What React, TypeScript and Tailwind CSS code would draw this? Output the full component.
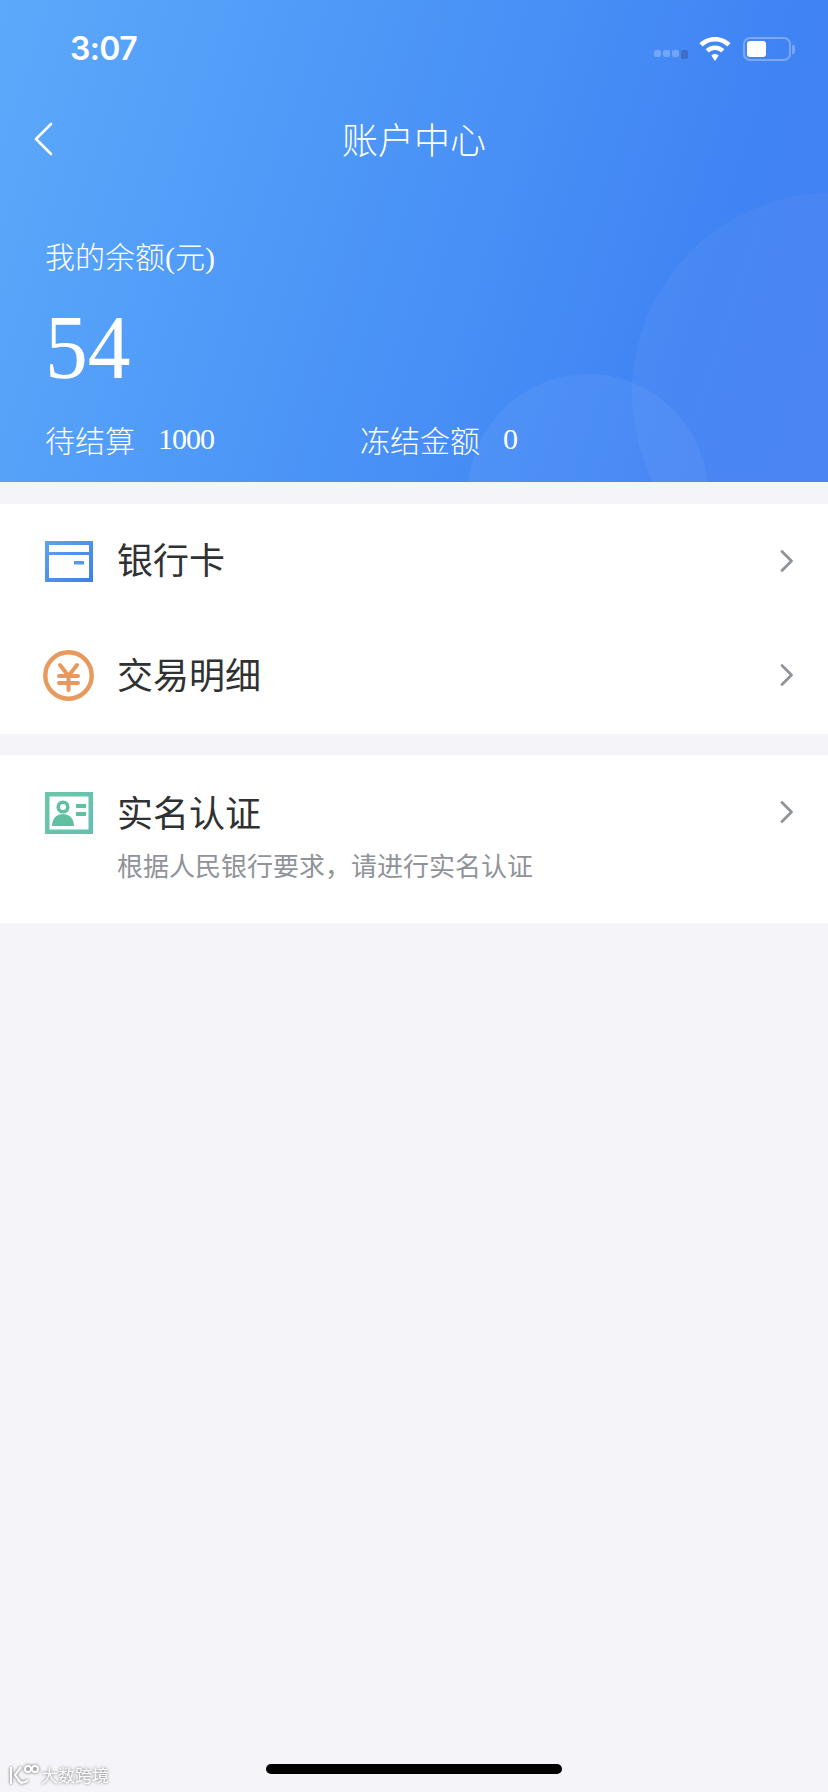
import React from "react";

const cjk = "font-['Noto_Sans_CJK_SC','Noto_Sans',sans-serif]";
const serif = "font-['Liberation_Serif','Noto_Sans_CJK_SC',serif]";

function Chevron({ className }: { className: string }) {
  return (
    <svg width="16" height="24" viewBox="0 0 16 24" fill="none" className={`shrink-0 ${className}`}>
      <path d="M3 2.5 L12.5 12 L3 21.5" stroke="#909399" strokeWidth="2.8" strokeLinecap="round" strokeLinejoin="round" />
    </svg>
  );
}

function CardIcon() {
  return (
    <svg width="48" height="42" viewBox="0 0 48 42">
      <defs>
        <linearGradient id="cardg" x1="0" y1="0" x2="1" y2="1">
          <stop offset="0" stopColor="#5fa3ee" />
          <stop offset="1" stopColor="#3f7fe6" />
        </linearGradient>
      </defs>
      <path fillRule="evenodd" fill="url(#cardg)" d="M0 0H48V41H0Z M4 4V11H44V4Z M4 14V37H44V14Z" />
      <rect x="29" y="20" width="10" height="3.500" fill="#5b97e8" />
    </svg>
  );
}

function YenIcon() {
  return (
    <svg width="51" height="51" viewBox="0 0 51 51" fill="none">
      <circle cx="25.500" cy="25.500" r="23.200" stroke="#e89a5e" strokeWidth="4.400" />
      <path d="M17 15 L25.500 26 L34 15 M25.500 26 V40 M16 26 H35 M16 33 H35" stroke="#e89a5e" strokeWidth="4" strokeLinecap="round" />
    </svg>
  );
}

function IdIcon() {
  return (
    <svg width="48" height="42" viewBox="0 0 48 42">
      <defs>
        <linearGradient id="idg" x1="0" y1="0" x2="1" y2="1">
          <stop offset="0" stopColor="#6cc6a8" />
          <stop offset="1" stopColor="#63c0b0" />
        </linearGradient>
      </defs>
      <path fillRule="evenodd" fill="url(#idg)" d="M0 0H48V42H0Z M4.500 4.500V37.500H43.500V4.500Z" />
      <circle cx="18" cy="15" r="4.800" fill="none" stroke="#62c0a2" strokeWidth="3.600" />
      <path d="M7 34 C7 26 12 22 18 22 C24 22 29 26 29 34 Z" fill="#62c0a2" />
      <rect x="31" y="12" width="10" height="4" fill="#62c0a2" />
      <rect x="31" y="20" width="10" height="4" fill="#62c0a2" />
    </svg>
  );
}

function Row({ icon, title, sub, className, chevronClass }: { icon: React.ReactNode; title: string; sub?: string; className: string; chevronClass: string }) {
  return (
    <div className={`flex pl-[45px] pr-[33px] ${className}`}>
      <div className="w-[73px] shrink-0 flex">{icon}</div>
      <div className="flex-1 min-w-0 -ml-[1px]">
        <div className="text-[36px] leading-[48px] text-[#303133]">{title}</div>
        {sub && <div className="mt-[12px] text-[26px] leading-[36px] text-[#909399]">{sub}</div>}
      </div>
      <Chevron className={chevronClass} />
    </div>
  );
}

export default function App() {
  return (
    <div className={`relative w-[828px] h-[1792px] bg-[#f4f4f9] overflow-hidden ${cjk}`}>
      <header className="relative h-[482px] overflow-hidden text-white bg-[linear-gradient(108deg,#5ca9fb_0%,#4d97f7_40%,#4083f4_82%,#4480f3_100%)]">
        <div className="absolute left-[632px] top-[193px] w-[400px] h-[400px] rounded-full bg-white/[0.04]" />
        <div className="absolute left-[468px] top-[374px] w-[240px] h-[240px] rounded-full bg-white/[0.05]" />

        <div className="relative h-[98px] pl-[70px] pr-[33px] flex items-center justify-between">
          <span className="font-['Inter',sans-serif] text-[32px] font-semibold leading-none tracking-[-0.6px]">3:07</span>
          <div className="flex items-center">
            <div className="flex gap-[2px] mr-[10px] mt-[10px]">
              <span className="w-[7px] h-[7px] rounded-[2px] bg-white/25" />
              <span className="w-[7px] h-[7px] rounded-[2px] bg-white/25" />
              <span className="w-[7px] h-[7px] rounded-[2px] bg-white/25" />
              <span className="w-[7px] h-[9px] rounded-[2px] bg-[#3c6fc4]" />
            </div>
            <svg width="34" height="26" viewBox="0 0 34 26" className="mr-[11px]">
              <path d="M17 1C10.800 1 5.400 3.400 1.500 7.200L4.600 10.400C7.800 7.300 12.200 5.400 17 5.400C21.800 5.400 26.200 7.300 29.400 10.400L32.500 7.200C28.600 3.400 23.200 1 17 1Z" fill="#fff" />
              <path d="M17 9.500C13.300 9.500 10 11 7.600 13.300L10.800 16.500C12.400 15 14.600 14 17 14C19.400 14 21.600 15 23.200 16.500L26.400 13.300C24 11 20.700 9.500 17 9.500Z" fill="#fff" />
              <path d="M17 18C15.500 18 14.200 18.600 13.300 19.500L17 25L20.700 19.500C19.800 18.600 18.500 18 17 18Z" fill="#fff" />
            </svg>
            <div className="flex items-center">
              <div className="w-[48px] h-[24px] rounded-[7px] border-2 border-white/30 p-[2px]">
                <div className="w-[19px] h-full rounded-[3px] bg-white" />
              </div>
              <span className="ml-[1px] w-[3px] h-[9px] rounded-r-[2px] bg-white/30" />
            </div>
          </div>
        </div>

        <div className="relative h-[84px] flex items-center justify-center">
          <svg width="20" height="34" viewBox="0 0 20 34" fill="none" className="absolute left-[33px] top-[24px]">
            <path d="M18 2 L3 17 L18 32" stroke="#fff" strokeWidth="2.600" strokeLinecap="round" strokeLinejoin="round" />
          </svg>
          <span className="text-[36px] font-light leading-none -mt-[4px]">账户中心</span>
        </div>

        <div className="relative pl-[45px] pt-[53px]">
          <div className="text-[30px] leading-[40px] font-light">
            我的余额<span className={serif}>(</span>元<span className={serif}>)</span>
          </div>
          <div className={`${serif} text-[92px] leading-[90px] mt-[24px] origin-left scale-x-[0.93]`}>54</div>
          <div className="flex mt-[27px] text-[30px] leading-[40px] font-light">
            <div className="w-[315px] flex items-center">
              <span>待结算</span>
              <span className={`${serif} text-[30px] tracking-[-1px] ml-[23px]`}>1000</span>
            </div>
            <div className="flex items-center">
              <span>冻结金额</span>
              <span className={`${serif} text-[30px] tracking-[-1px] ml-[23px]`}>0</span>
            </div>
          </div>
        </div>
      </header>

      <section className="mt-[22px] bg-white h-[230px] flex flex-col">
        <Row icon={<div className="mt-[7px]"><CardIcon /></div>} title="银行卡" className="h-[115px] pt-[30px]" chevronClass="mt-[15px]" />
        <Row icon={<div className="-ml-[2px] mt-[1px]"><YenIcon /></div>} title="交易明细" className="h-[115px] pt-[30px]" chevronClass="mt-[14px]" />
      </section>

      <section className="mt-[21px] bg-white h-[168px]">
        <Row icon={<div className="mt-[5px]"><IdIcon /></div>} title="实名认证" sub="根据人民银行要求，请进行实名认证" className="pt-[32px]" chevronClass="mt-[13px]" />
      </section>

      <div className="absolute left-[266px] top-[1764px] w-[296px] h-[10px] rounded-full bg-black" />

      <div className="absolute left-[8px] top-[1763px] flex items-center text-white [text-shadow:0_0_3px_rgba(70,70,70,0.8)]">
        <svg width="32" height="22" viewBox="0 0 32 22" fill="none" stroke="#fff" strokeWidth="2" className="[filter:drop-shadow(0_0_1.5px_rgba(70,70,70,0.9))]">
          <path d="M3 3V20M13 3L7 11L14 20M20 16C16 20 11 19 10 15" />
          <circle cx="20" cy="5" r="3" />
          <circle cx="27" cy="5" r="3" />
        </svg>
        <span className="ml-[1px] text-[17px] leading-[24px]">大数跨境</span>
      </div>
    </div>
  );
}
